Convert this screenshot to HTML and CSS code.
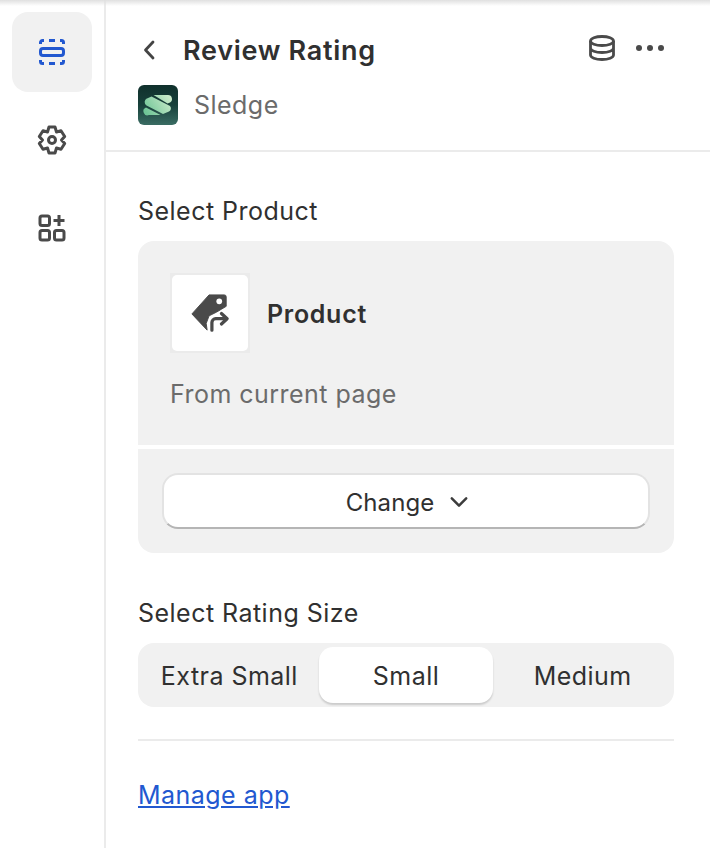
FILE: index.html
```html
<!DOCTYPE html>
<html lang="en">
<head>
    <meta charset="UTF-8">
    <meta name="viewport" content="width=device-width, initial-scale=1.0">
    <title>Review Rating</title>
    <link rel="stylesheet" href="styles.css">
</head>
<body>
    <div class="layout">
        <nav class="rail">
            <button class="rail-item active">
                <svg width="28" height="28" viewBox="0 0 28 28" fill="none" stroke="#2258d0" stroke-width="3">
                    <rect x="2.5" y="10.5" width="23" height="7" rx="2.5"/>
                    <path d="M2.5 6V4.5a2 2 0 0 1 2-2H6M11 2.5h6M22 2.5h1.500a2 2 0 0 1 2 2V6M2.500 22v1.500a2 2 0 0 0 2 2H6M11 25.500h6M22 25.500h1.500a2 2 0 0 0 2-2V22"/>
                </svg>
            </button>
            <button class="rail-item">
                <svg width="32" height="32" viewBox="0 0 32 32" fill="none" stroke="#4a4a4a" stroke-width="3" stroke-linejoin="round">
                    <circle cx="16" cy="16" r="3.500"/>
                    <path d="M13 3h6l1.500 5 4.500-1.200 3.700 5.700-3.200 3.500 3.200 3.500-3.700 5.700-4.500-1.200-1.500 5h-6l-1.500-5-4.500 1.200-3.700-5.700 3.200-3.500-3.200-3.500 3.700-5.700 4.500 1.200z"/>
                </svg>
            </button>
            <button class="rail-item">
                <svg width="28" height="28" viewBox="0 0 28 28" fill="none" stroke="#4a4a4a" stroke-width="3">
                    <rect x="2" y="2" width="9.500" height="9.500" rx="2"/>
                    <rect x="2" y="16.500" width="9.500" height="9.500" rx="2"/>
                    <rect x="16.500" y="16.500" width="9.500" height="9.500" rx="2"/>
                    <path d="M21 1v11M15.500 6.500h11"/>
                </svg>
            </button>
        </nav>

        <main class="panel">
            <header class="panel-head">
                <div class="title-row">
                    <svg class="back" width="14" height="22" viewBox="0 0 14 22" fill="none" stroke="#444" stroke-width="2.800" stroke-linecap="round" stroke-linejoin="round">
                        <path d="M11 3l-7.500 8 7.500 8"/>
                    </svg>
                    <h1>Review Rating</h1>
                    <svg class="db" width="28" height="28" viewBox="0 0 28 28" fill="none" stroke="#4a4a4a" stroke-width="2.800">
                        <ellipse cx="14" cy="7" rx="11.500" ry="4.500"/>
                        <path d="M2.500 7v14c0 2.500 5 4.500 11.500 4.500s11.500-2 11.500-4.500V7M2.500 14c0 2.500 5 4.500 11.500 4.500s11.500-2 11.500-4.500"/>
                    </svg>
                    <div class="dots"><span></span><span></span><span></span></div>
                </div>
                <div class="app-row">
                    <svg class="logo" width="40" height="40" viewBox="0 0 40 40">
                        <defs>
                            <linearGradient id="logoBg" x1="0" y1="0" x2="0" y2="1">
                                <stop offset="0" stop-color="#10302c"/>
                                <stop offset="0.5" stop-color="#17403a"/>
                                <stop offset="1" stop-color="#3a6c63"/>
                            </linearGradient>
                            <linearGradient id="logoBar" gradientUnits="userSpaceOnUse" x1="8" y1="28" x2="33" y2="12">
                                <stop offset="0" stop-color="#6fc597"/>
                                <stop offset="1" stop-color="#cdeccb"/>
                            </linearGradient>
                        </defs>
                        <rect width="40" height="40" rx="6" fill="url(#logoBg)"/>
                        <path d="M15.500 10H30a4 4 0 0 1 1.500 7.700L29.500 18.500z" fill="url(#logoBar)"/>
                        <path d="M13.500 11.500L32 21a3.500 3.500 0 0 1-1 5.500L25 29 8.500 20.500a4 4 0 0 1 .5-7z" fill="url(#logoBar)"/>
                        <path d="M8 22.500L22.500 30H11a4 4 0 0 1-3-7.500z" fill="url(#logoBar)"/>
                    </svg>
                    <span class="app-name">Sledge</span>
                </div>
            </header>

            <section class="body">
                <label class="field-label">Select Product</label>
                <div class="product-card">
                    <div class="product-top">
                        <div class="product-row">
                            <div class="thumb">
                                <div class="thumb-inner">
                                    <svg width="40" height="42" viewBox="0 0 42 42">
                                        <path d="M20 2H36a2 2 0 0 1 2 2V14L33 17 28 20 20 24 17 32 18 39 2 22z" fill="#4a4a4a" stroke="#4a4a4a" stroke-width="1" stroke-linejoin="round"/>
                                        <circle cx="30.700" cy="8.700" r="3" fill="#fff"/>
                                        <path d="M23 39V31a4 4 0 0 1 4-4H38M33 21.500l6 5.500-6 5.500" fill="none" stroke="#4a4a4a" stroke-width="3.400" stroke-linecap="round" stroke-linejoin="round"/>
                                    </svg>
                                </div>
                            </div>
                            <span class="product-name">Product</span>
                        </div>
                        <p class="product-note">From current page</p>
                    </div>
                    <div class="product-bottom">
                        <button class="change-btn">
                            Change
                            <svg width="18" height="12" viewBox="0 0 20 12" fill="none" stroke="#3c3c3c" stroke-width="2.800" stroke-linecap="round" stroke-linejoin="round">
                                <path d="M2 2l8 8 8-8"/>
                            </svg>
                        </button>
                    </div>
                </div>

                <label class="field-label size-label">Select Rating Size</label>
                <div class="segments">
                    <button class="segment">Extra Small</button>
                    <button class="segment selected">Small</button>
                    <button class="segment">Medium</button>
                </div>

                <hr class="divider">

                <a class="manage" href="#">Manage app</a>
            </section>
        </main>
    </div>
</body>
</html>
```

FILE: styles.css
```css
* {
    box-sizing: border-box;
}

body {
    font-family: Inter, "Liberation Sans", sans-serif;
    letter-spacing: 0.47px;
    background-color: #fff;
    color: #303030;
    margin: 0;
    padding: 0;
    height: 848px;
    overflow: hidden;
}

.layout {
    position: relative;
    display: flex;
    height: 848px;
}

/* soft shadow from the bar above the panel */
.layout::before {
    content: "";
    position: absolute;
    top: 0;
    left: 0;
    right: 0;
    height: 6px;
    background: linear-gradient(#e0e0e0, rgba(255, 255, 255, 0));
    pointer-events: none;
}

button {
    font-family: inherit;
    letter-spacing: inherit;
    color: inherit;
    border: none;
    background: none;
    padding: 0;
}

.rail {
    width: 106px;
    flex-shrink: 0;
    border-right: 2px solid #ebebeb;
    padding: 12px;
    display: flex;
    flex-direction: column;
    gap: 8px;
}

.rail-item {
    width: 80px;
    height: 80px;
    border-radius: 16px;
    display: flex;
    align-items: center;
    justify-content: center;
}

.rail-item.active {
    background-color: #f1f1f1;
}

.panel {
    flex: 1;
    min-width: 0;
}

.panel-head {
    height: 152px;
    border-bottom: 2px solid #ebebeb;
    padding: 32px 32px 0;
}

.title-row {
    display: flex;
    align-items: center;
    height: 36px;
}

.back {
    margin-left: 4px;
    margin-right: 27px;
}

h1 {
    margin: 0;
    font-size: 27px;
    font-weight: 600;
    letter-spacing: 0.7px;
    color: #303030;
    flex: 1;
}

.db {
    margin-right: 20px;
    margin-top: -4px;
}

.dots {
    display: flex;
    gap: 5px;
    margin-right: 14px;
    margin-top: -4px;
}

.dots span {
    width: 6px;
    height: 6px;
    border-radius: 50%;
    background-color: #4a4a4a;
}

.app-row {
    display: flex;
    align-items: center;
    gap: 16px;
    margin-top: 17px;
}

.app-name {
    font-size: 25px;
    color: #6b6b6b;
}

.body {
    padding: 44px 36px 0 32px;
}

.field-label {
    display: block;
    font-size: 25px;
    line-height: 30px;
    color: #303030;
    margin-bottom: 15px;
}

.product-card {
    border-radius: 16px;
    overflow: hidden;
}

.product-top {
    background-color: #f1f1f1;
    height: 204px;
    padding: 32px 32px 0;
}

.product-row {
    display: flex;
    align-items: center;
    gap: 17px;
}

.thumb {
    width: 80px;
    height: 80px;
    background-color: #ebebeb;
    padding: 2px;
}

.thumb-inner {
    height: 100%;
    background-color: #fff;
    border-radius: 5px;
    display: flex;
    align-items: center;
    justify-content: center;
}

.product-name {
    font-size: 25px;
    font-weight: 600;
    letter-spacing: 0.7px;
    padding-top: 2px;
}

.product-note {
    margin: 26px 0 0;
    font-size: 25px;
    line-height: 30px;
    color: #6b6b6b;
}

.product-bottom {
    background-color: #f1f1f1;
    margin-top: 4px;
    height: 104px;
    padding: 24px;
}

.change-btn {
    width: 100%;
    height: 56px;
    background-color: #fff;
    border-radius: 16px;
    border: 2px solid #e3e3e3;
    border-bottom-color: #b5b5b5;
    font-size: 24px;
    letter-spacing: 0.1px;
    padding: 2px 0 0 2px;
    display: flex;
    align-items: center;
    justify-content: center;
    gap: 16px;
}

.size-label {
    margin-top: 45px;
}

.segments {
    display: flex;
    gap: 2px;
    background-color: #f1f1f1;
    border-radius: 16px;
    height: 64px;
    padding: 4px;
}

.segment {
    flex: 1;
    font-size: 25px;
    border-radius: 14px;
    padding-top: 2px;
}

.segment.selected {
    background-color: #fff;
    box-shadow: 0 2px 2px rgba(0, 0, 0, 0.16);
}

.divider {
    border: none;
    border-top: 2px solid #ebebeb;
    margin: 32px 0 0;
}

.manage {
    display: block;
    margin-top: 39px;
    font-size: 25px;
    line-height: 30px;
    color: #2258d0;
}
```
